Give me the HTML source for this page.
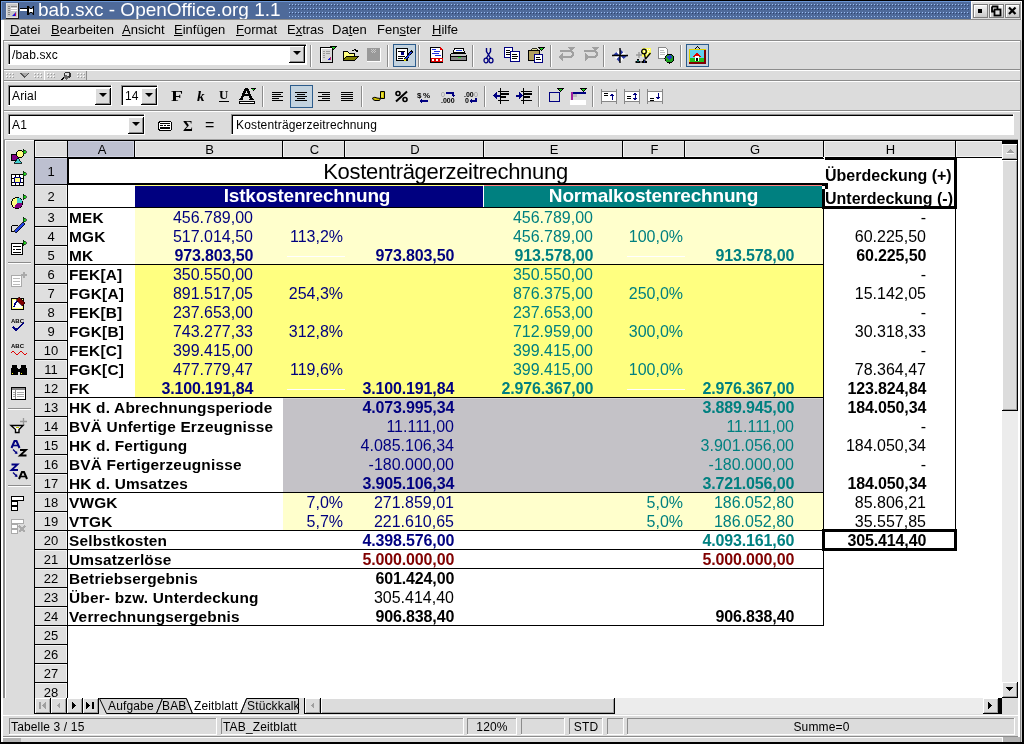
<!DOCTYPE html><html><head><meta charset="utf-8"><style>
html,body{margin:0;padding:0;}
body{width:1024px;height:744px;position:relative;overflow:hidden;background:#dcdcdc;font-family:"Liberation Sans",sans-serif;}
.t{will-change:transform;}
div{position:absolute;box-sizing:border-box;}
.t{white-space:nowrap;line-height:1;}
svg{position:absolute;overflow:visible;}
</style></head><body>
<div style="left:0px;top:0px;width:1024px;height:744px;background:#000"></div>
<div style="left:1px;top:1px;width:1022px;height:742px;background:#dcdcdc"></div>
<div style="left:1px;top:1px;width:1022px;height:19px;background:#6a96d6"></div>
<div style="left:2px;top:2px;width:1021px;height:17px;background:#4e6a9a"></div>
<svg style="left:0;top:0" width="1024" height="20"><defs><pattern id="dots" x="289" y="4" width="3" height="4" patternUnits="userSpaceOnUse"><rect x="1" y="1" width="1" height="1" fill="#2f4470"/><rect x="0" y="0" width="1" height="1" fill="#9bbef5"/></pattern></defs><rect x="289" y="4" width="680" height="13" fill="url(#dots)"/></svg>
<div style="left:6px;top:3px;width:13px;height:16px;background:#1e1e1e"></div>
<div style="left:6px;top:3px;width:12px;height:15px;background:#e0e0e0"></div>
<div style="left:7px;top:4px;width:10px;height:13px;background:#c8c8c8"></div>
<svg style="left:6px;top:3px" width="13" height="16"><g fill="#888"><rect x="2" y="3" width="2" height="1"/><rect x="5" y="3" width="6" height="1"/><rect x="2" y="5" width="2" height="1"/><rect x="5" y="5" width="6" height="1" fill="#fff"/><rect x="2" y="7" width="2" height="1"/><rect x="5" y="7" width="6" height="1" fill="#fff"/><rect x="2" y="9" width="2" height="1"/><rect x="2" y="11" width="2" height="1"/></g><path d="M6 13 L10 13 L10 9 Z" fill="#1010e0"/><rect x="9" y="10" width="1" height="3" fill="#c01060"/></svg>
<svg style="left:20px;top:5px" width="15" height="11"><rect x="0" y="4" width="7" height="2" fill="#fff"/><rect x="0" y="3" width="7" height="1" fill="#000"/><path d="M7 1 L9 1 L10 3 L12 3 L13 1 L14 1 L14 10 L13 10 L12 8 L10 8 L9 10 L7 10 Z" fill="#000"/><path d="M9 3 L10 4 L12 4 L13 3 L13 8 L12 7 L10 7 L9 8 Z" fill="#fff"/></svg>
<div class="t" style="left:38px;top:1px;font-size:19px;color:#fff;line-height:18px;">bab.sxc - OpenOffice.org 1.1</div>
<div style="left:971px;top:1px;width:51px;height:19px;background:#fff"></div>
<div style="left:972px;top:2px;width:49px;height:17px;background:#dcdcdc"></div>
<div style="left:1020px;top:2px;width:1px;height:17px;background:#a0a0a0"></div>
<div style="left:973px;top:4px;width:15px;height:14px;background:#7c7c7c"></div>
<div style="left:974px;top:5px;width:13px;height:12px;background:linear-gradient(#f4f4f4,#c8c8c8)"></div>
<div style="left:974px;top:5px;width:13px;height:1px;background:#fff"></div>
<div style="left:974px;top:5px;width:1px;height:12px;background:#fff"></div>
<div style="left:989px;top:4px;width:15px;height:14px;background:#7c7c7c"></div>
<div style="left:990px;top:5px;width:13px;height:12px;background:linear-gradient(#f4f4f4,#c8c8c8)"></div>
<div style="left:990px;top:5px;width:13px;height:1px;background:#fff"></div>
<div style="left:990px;top:5px;width:1px;height:12px;background:#fff"></div>
<div style="left:1005px;top:4px;width:15px;height:14px;background:#7c7c7c"></div>
<div style="left:1006px;top:5px;width:13px;height:12px;background:linear-gradient(#f4f4f4,#c8c8c8)"></div>
<div style="left:1006px;top:5px;width:13px;height:1px;background:#fff"></div>
<div style="left:1006px;top:5px;width:1px;height:12px;background:#fff"></div>
<svg style="left:973px;top:4px" width="48" height="14"><rect x="5" y="5" width="4" height="4" fill="#000"/><path d="M19 2.5 H24.5 V5 M19 2.5 V7.5 H21" stroke="#000" stroke-width="1.8" fill="none"/><rect x="21.5" y="5.5" width="6" height="6" fill="#ddd" stroke="#000" stroke-width="1.8"/><path d="M36 3.5 L42.5 10 M42.5 3.5 L36 10" stroke="#000" stroke-width="2.2"/></svg>
<div style="left:3px;top:19px;width:1018px;height:1px;background:#8c8c8c"></div>
<div style="left:3px;top:20px;width:1018px;height:20px;background:#dcdcdc"></div>
<div style="left:3px;top:20px;width:1px;height:20px;background:#fff"></div>
<div class="t" style="left:10px;top:23px;font-size:13px;color:#000;line-height:13px;"><u>D</u>atei</div>
<div class="t" style="left:51px;top:23px;font-size:13px;color:#000;line-height:13px;"><u>B</u>earbeiten</div>
<div class="t" style="left:122px;top:23px;font-size:13px;color:#000;line-height:13px;"><u>A</u>nsicht</div>
<div class="t" style="left:174px;top:23px;font-size:13px;color:#000;line-height:13px;"><u>E</u>infügen</div>
<div class="t" style="left:236px;top:23px;font-size:13px;color:#000;line-height:13px;"><u>F</u>ormat</div>
<div class="t" style="left:287px;top:23px;font-size:13px;color:#000;line-height:13px;">E<u>x</u>tras</div>
<div class="t" style="left:332px;top:23px;font-size:13px;color:#000;line-height:13px;">Da<u>t</u>en</div>
<div class="t" style="left:377px;top:23px;font-size:13px;color:#000;line-height:13px;">Fen<u>s</u>ter</div>
<div class="t" style="left:432px;top:23px;font-size:13px;color:#000;line-height:13px;"><u>H</u>ilfe</div>
<div style="left:3px;top:40px;width:1018px;height:1px;background:#8c8c8c"></div>
<div style="left:3px;top:41px;width:1018px;height:1px;background:#fff"></div>
<div style="left:3px;top:69px;width:1018px;height:1px;background:#8c8c8c"></div>
<div style="left:3px;top:70px;width:1018px;height:1px;background:#fff"></div>
<div style="left:3px;top:80px;width:1018px;height:1px;background:#8c8c8c"></div>
<div style="left:3px;top:81px;width:1018px;height:1px;background:#fff"></div>
<div style="left:3px;top:110px;width:1018px;height:1px;background:#8c8c8c"></div>
<div style="left:3px;top:111px;width:1018px;height:1px;background:#fff"></div>
<div style="left:8px;top:44px;width:299px;height:21px;background:#fff"></div>
<div style="left:8px;top:44px;width:299px;height:1px;background:#8c8c8c"></div>
<div style="left:8px;top:44px;width:1px;height:21px;background:#8c8c8c"></div>
<div style="left:9px;top:45px;width:297px;height:1px;background:#000"></div>
<div style="left:9px;top:45px;width:1px;height:19px;background:#000"></div>
<div style="left:8px;top:64px;width:299px;height:1px;background:#fff"></div>
<div style="left:306px;top:44px;width:1px;height:21px;background:#fff"></div>
<div class="t" style="left:12px;top:49px;font-size:12px;line-height:13px;letter-spacing:0.15px;">/bab.sxc</div>
<div style="left:289px;top:46px;width:16px;height:17px;background:#000"></div>
<div style="left:289px;top:46px;width:15px;height:16px;background:#fff"></div>
<div style="left:290px;top:47px;width:14px;height:15px;background:#8c8c8c"></div>
<div style="left:290px;top:47px;width:13px;height:14px;background:#dcdcdc"></div>
<svg style="left:293px;top:51px" width="8" height="5"><path d="M0 0 L8 0 L4 4 Z" fill="#000"/></svg>
<div style="left:310px;top:45px;width:1px;height:22px;background:#8c8c8c"></div>
<div style="left:311px;top:45px;width:1px;height:22px;background:#fff"></div>
<div style="left:387px;top:45px;width:1px;height:22px;background:#8c8c8c"></div>
<div style="left:388px;top:45px;width:1px;height:22px;background:#fff"></div>
<div style="left:418px;top:45px;width:1px;height:22px;background:#8c8c8c"></div>
<div style="left:419px;top:45px;width:1px;height:22px;background:#fff"></div>
<div style="left:472px;top:45px;width:1px;height:22px;background:#8c8c8c"></div>
<div style="left:473px;top:45px;width:1px;height:22px;background:#fff"></div>
<div style="left:550px;top:45px;width:1px;height:22px;background:#8c8c8c"></div>
<div style="left:551px;top:45px;width:1px;height:22px;background:#fff"></div>
<div style="left:603px;top:45px;width:1px;height:22px;background:#8c8c8c"></div>
<div style="left:604px;top:45px;width:1px;height:22px;background:#fff"></div>
<div style="left:680px;top:45px;width:1px;height:22px;background:#8c8c8c"></div>
<div style="left:681px;top:45px;width:1px;height:22px;background:#fff"></div>
<div style="left:393px;top:44px;width:23px;height:23px;background:#2c5c8c"></div>
<div style="left:394px;top:45px;width:21px;height:21px;background:#c3d3df"></div>
<div style="left:686px;top:44px;width:23px;height:23px;background:#2c5c8c"></div>
<div style="left:687px;top:45px;width:21px;height:21px;background:#c3d3df"></div>
<svg style="left:320px;top:46px" width="17" height="18" shape-rendering="crispEdges"><rect x="0" y="1" width="13" height="16" fill="#000"/><rect x="1" y="2" width="11" height="14" fill="#fff"/><rect x="2" y="3" width="10" height="13" fill="#d8d8d8"/><g fill="#999"><rect x="3" y="5" width="2" height="1"/><rect x="6" y="5" width="4" height="1"/><rect x="3" y="7" width="2" height="1"/><rect x="6" y="7" width="4" height="1"/><rect x="3" y="9" width="2" height="1"/><rect x="3" y="11" width="2" height="1"/></g><path d="M7 14 L11 14 L11 10 Z" fill="#2020d0"/><rect x="10" y="11" width="1" height="3" fill="#c02070"/><path d="M10 0 L17 0 L13.5 4 Z" fill="#000"/><path d="M11 0.5 L16 0.5 L13.5 3 Z" fill="#20d020"/></svg>
<svg style="left:343px;top:48px" width="16" height="14" shape-rendering="crispEdges"><path d="M0 3 L5 3 L6 5 L12 5 L12 13 L0 13 Z" fill="#000"/><path d="M1 4 L5 4 L6 6 L11 6 L11 12 L1 12 Z" fill="#ffff80"/><path d="M3 8 L16 8 L12 13 L0 13 Z" fill="#000"/><path d="M3.5 9 L14.5 9 L11.5 12 L1 12 Z" fill="#7f7f00"/><path d="M9 3 Q11 0 14 2 L15 1 L15 4 L12 4 L13 3 Q11 1.5 10 3.5Z" fill="#000"/></svg>
<svg style="left:367px;top:48px" width="14" height="14" shape-rendering="crispEdges"><rect x="0" y="0" width="14" height="14" fill="#fff"/><rect x="0" y="0" width="13" height="13" fill="#999"/><g fill="#c8c8c8"><rect x="4" y="1" width="1" height="1"/><rect x="6" y="1" width="1" height="1"/><rect x="8" y="1" width="1" height="1"/><rect x="5" y="2" width="1" height="1"/><rect x="7" y="2" width="1" height="1"/><rect x="4" y="3" width="1" height="1"/><rect x="6" y="3" width="1" height="1"/><rect x="8" y="3" width="1" height="1"/><rect x="5" y="4" width="1" height="1"/><rect x="7" y="4" width="1" height="1"/></g></svg>
<svg style="left:396px;top:47px" width="17" height="15" shape-rendering="crispEdges"><rect x="0" y="1" width="12" height="13" fill="#000"/><rect x="1" y="2" width="10" height="11" fill="#fff"/><g fill="#000"><rect x="2" y="4" width="7" height="1"/><rect x="2" y="9" width="7" height="1"/><rect x="2" y="11" width="5" height="1"/></g><rect x="5" y="5" width="3" height="3" fill="#000080"/><path d="M8 12 L15 3 L17 5 L10 14 Z" fill="#000"/><path d="M9 12 L15 4.5 L16 5.5 L10 13 Z" fill="#2040e0"/><rect x="8" y="12" width="2" height="2" fill="#e0e000"/></svg>
<svg style="left:430px;top:47px" width="14" height="16" shape-rendering="crispEdges"><path d="M0 0 L10 0 L13 3 L13 16 L0 16 Z" fill="#000"/><path d="M1 1 L10 1 L12 3 L12 11 L1 11 Z" fill="#fff"/><path d="M10 0 L13 3 L10 3Z" fill="#e00000"/><g fill="#2030e0"><rect x="2" y="2" width="4" height="1"/><rect x="4" y="4" width="6" height="1"/><rect x="2" y="6" width="7" height="1"/><rect x="5" y="8" width="6" height="1"/></g><rect x="1" y="11" width="12" height="4" fill="#e00000"/><g fill="#fff"><rect x="2" y="12" width="2" height="2"/><rect x="6" y="12" width="2" height="2"/><rect x="10" y="12" width="2" height="2"/></g></svg>
<svg style="left:450px;top:48px" width="17" height="14" shape-rendering="crispEdges"><path d="M4 0 L14 0 L15 5 L3 5 Z" fill="#000"/><path d="M5 1 L13 1 L14 4 L4 4Z" fill="#fff"/><rect x="6" y="2" width="6" height="1" fill="#2040e0"/><path d="M1 5 L16 5 L17 8 L17 13 L0 13 L0 8 Z" fill="#000"/><rect x="1" y="6" width="15" height="2" fill="#c8c8c8"/><rect x="1" y="9" width="15" height="3" fill="#888"/><rect x="8" y="9" width="3" height="1" fill="#20e020"/></svg>
<svg style="left:483px;top:47px" width="12" height="17"><path d="M3.5 1 V4.5 L7.8 11.5 M7.5 1 V4.5 L3.2 11.5" stroke="#000080" stroke-width="1.4" fill="none"/><ellipse cx="3" cy="13.5" rx="2" ry="2.3" fill="none" stroke="#000080" stroke-width="1.3"/><ellipse cx="8" cy="13.5" rx="2" ry="2.3" fill="none" stroke="#000080" stroke-width="1.3"/></svg>
<svg style="left:504px;top:47px" width="16" height="15" shape-rendering="crispEdges"><rect x="0" y="0" width="9" height="11" fill="#000080"/><rect x="1" y="1" width="7" height="9" fill="#fff"/><g fill="#000"><rect x="2" y="3" width="4" height="1"/><rect x="2" y="5" width="5" height="1"/><rect x="2" y="7" width="4" height="1"/></g><rect x="6" y="4" width="10" height="11" fill="#000080"/><rect x="7" y="5" width="8" height="9" fill="#fff"/><g fill="#000"><rect x="8" y="7" width="5" height="1"/><rect x="8" y="9" width="6" height="1"/><rect x="8" y="11" width="5" height="1"/></g></svg>
<svg style="left:528px;top:47px" width="17" height="16" shape-rendering="crispEdges"><rect x="0" y="3" width="12" height="11" fill="#000"/><rect x="1" y="4" width="10" height="9" fill="#b0a060"/><path d="M3 3 L5 1 L8 1 L10 3Z" fill="#e0e0a0" stroke="#000" stroke-width="0.8"/><rect x="6" y="7" width="9" height="9" fill="#000080"/><rect x="7" y="8" width="7" height="7" fill="#fff"/><rect x="8" y="10" width="4" height="1" fill="#000"/><rect x="8" y="12" width="5" height="1" fill="#000"/><path d="M10 0 L17 0 L13.5 4 Z" fill="#000"/><path d="M11 0.5 L16 0.5 L13.5 3 Z" fill="#20d020"/></svg>
<svg style="left:558px;top:47px" width="17" height="14" shape-rendering="crispEdges"><path d="M2 4 L12 4 Q15 4 15 7 Q15 10 12 10 L4 10" stroke="#a0a0a0" stroke-width="2.2" fill="none"/><path d="M0 10 L5 6 L5 14Z" fill="#a0a0a0"/><path d="M9 0 L17 0 L13 4Z" fill="#a0a0a0"/></svg>
<svg style="left:582px;top:47px" width="17" height="14" shape-rendering="crispEdges"><path d="M2 4 L12 4 Q15 4 15 7 Q15 10 12 10 L3 10" stroke="#a0a0a0" stroke-width="2.2" fill="none"/><path d="M8 10 L3 6 L3 14Z" fill="#a0a0a0"/><path d="M9 0 L17 0 L13 4Z" fill="#a0a0a0"/></svg>
<svg style="left:611px;top:47px" width="18" height="17"><path d="M9 2 L12.5 5.5 L9 8.5Z M16.5 8.5 L12.5 12 L9 8.5Z M9 15.5 L5.5 12 L9 8.5Z M1.5 8.5 L5.5 5 L9 8.5Z" fill="#2838a8"/><path d="M9 2 L5.5 5.5 L9 8.5Z M16.5 8.5 L12.5 5 L9 8.5Z M9 15.5 L12.5 12 L9 8.5Z M1.5 8.5 L5.5 12 L9 8.5Z" fill="#fff"/><path d="M9 1 V16 M1 8.5 H17" stroke="#000" stroke-width="1.4"/></svg>
<svg style="left:635px;top:47px" width="17" height="17"><path d="M7 1 H16 V7 L12 10 H7Z" fill="#ffff60"/><g fill="#fff"><rect x="8" y="2" width="1" height="1"/><rect x="10" y="2" width="1" height="1"/><rect x="12" y="2" width="1" height="1"/><rect x="14" y="2" width="1" height="1"/><rect x="9" y="4" width="1" height="1"/><rect x="11" y="4" width="1" height="1"/><rect x="13" y="4" width="1" height="1"/><rect x="12" y="6" width="1" height="1"/></g><circle cx="9" cy="4.5" r="2.3" fill="none" stroke="#000" stroke-width="1.3"/><path d="M9.5 7 L10.5 12 M15.5 6 L10.5 12" stroke="#000" stroke-width="1.3" fill="none"/><path d="M4 5 V11 M1 8 H7" stroke="#999" stroke-width="1.4"/><path d="M2 12 H4 V14 H5.5 V16 H0.5 V14 H2Z" fill="#000"/><rect x="2.5" y="13" width="1" height="2" fill="#20a0a0"/><path d="M8 12.5 H10.5 V14 H12 V16 H6.5 V14 H8Z" fill="#000"/><rect x="9" y="13.5" width="1" height="2" fill="#2030a0"/></svg>
<svg style="left:658px;top:47px" width="17" height="17" shape-rendering="crispEdges"><path d="M0 0 L7 0 L10 3 L10 12 L0 12Z" fill="#888"/><path d="M1 1 L7 1 L9 3 L9 11 L1 11Z" fill="#fff"/><g fill="#bbb"><rect x="2" y="3" width="4" height="1"/><rect x="2" y="5" width="5" height="1"/><rect x="2" y="7" width="5" height="1"/></g><circle cx="11.5" cy="11.5" r="5" fill="#000"/><circle cx="11.5" cy="11.5" r="4" fill="#20a020"/><path d="M9 9 L12 8 L14 10 L12 13 L10 12Z" fill="#2040c0"/></svg>
<svg style="left:689px;top:46px" width="17" height="19" shape-rendering="crispEdges"><path d="M6 3 L8.5 0.5 L11 3" stroke="#000" stroke-width="1" fill="none"/><rect x="0" y="3" width="17" height="15" fill="#e0d000"/><rect x="1" y="4" width="14" height="12" fill="#60d0f0"/><rect x="1" y="12" width="14" height="4" fill="#20c020"/><path d="M4 11 L8 6 L12 11Z" fill="#e00000"/><rect x="6" y="10" width="4" height="5" fill="#fff"/><rect x="7" y="12" width="2" height="3" fill="#000"/><rect x="15" y="4" width="2" height="14" fill="#800000"/><rect x="0" y="16" width="17" height="2" fill="#800000"/></svg>
<div style="left:4px;top:71px;width:41px;height:9px;background:#d4d4d4"></div>
<div style="left:45px;top:71px;width:41px;height:9px;background:#d4d4d4"></div>
<div style="left:44px;top:71px;width:1px;height:9px;background:#fff"></div>
<div style="left:86px;top:71px;width:1px;height:9px;background:#8c8c8c"></div>
<svg style="left:6px;top:73px" width="9" height="6" shape-rendering="crispEdges"><rect x="0" y="0" width="1" height="1" fill="#fff"/><rect x="1" y="1" width="1" height="1" fill="#999"/><rect x="0" y="3" width="1" height="1" fill="#fff"/><rect x="1" y="4" width="1" height="1" fill="#999"/><rect x="3" y="0" width="1" height="1" fill="#fff"/><rect x="4" y="1" width="1" height="1" fill="#999"/><rect x="3" y="3" width="1" height="1" fill="#fff"/><rect x="4" y="4" width="1" height="1" fill="#999"/><rect x="6" y="0" width="1" height="1" fill="#fff"/><rect x="7" y="1" width="1" height="1" fill="#999"/><rect x="6" y="3" width="1" height="1" fill="#fff"/><rect x="7" y="4" width="1" height="1" fill="#999"/></svg>
<svg style="left:34px;top:73px" width="9" height="6" shape-rendering="crispEdges"><rect x="0" y="0" width="1" height="1" fill="#fff"/><rect x="1" y="1" width="1" height="1" fill="#999"/><rect x="0" y="3" width="1" height="1" fill="#fff"/><rect x="1" y="4" width="1" height="1" fill="#999"/><rect x="3" y="0" width="1" height="1" fill="#fff"/><rect x="4" y="1" width="1" height="1" fill="#999"/><rect x="3" y="3" width="1" height="1" fill="#fff"/><rect x="4" y="4" width="1" height="1" fill="#999"/><rect x="6" y="0" width="1" height="1" fill="#fff"/><rect x="7" y="1" width="1" height="1" fill="#999"/><rect x="6" y="3" width="1" height="1" fill="#fff"/><rect x="7" y="4" width="1" height="1" fill="#999"/></svg>
<svg style="left:47px;top:73px" width="9" height="6" shape-rendering="crispEdges"><rect x="0" y="0" width="1" height="1" fill="#fff"/><rect x="1" y="1" width="1" height="1" fill="#999"/><rect x="0" y="3" width="1" height="1" fill="#fff"/><rect x="1" y="4" width="1" height="1" fill="#999"/><rect x="3" y="0" width="1" height="1" fill="#fff"/><rect x="4" y="1" width="1" height="1" fill="#999"/><rect x="3" y="3" width="1" height="1" fill="#fff"/><rect x="4" y="4" width="1" height="1" fill="#999"/><rect x="6" y="0" width="1" height="1" fill="#fff"/><rect x="7" y="1" width="1" height="1" fill="#999"/><rect x="6" y="3" width="1" height="1" fill="#fff"/><rect x="7" y="4" width="1" height="1" fill="#999"/></svg>
<svg style="left:77px;top:73px" width="9" height="6" shape-rendering="crispEdges"><rect x="0" y="0" width="1" height="1" fill="#fff"/><rect x="1" y="1" width="1" height="1" fill="#999"/><rect x="0" y="3" width="1" height="1" fill="#fff"/><rect x="1" y="4" width="1" height="1" fill="#999"/><rect x="3" y="0" width="1" height="1" fill="#fff"/><rect x="4" y="1" width="1" height="1" fill="#999"/><rect x="3" y="3" width="1" height="1" fill="#fff"/><rect x="4" y="4" width="1" height="1" fill="#999"/><rect x="6" y="0" width="1" height="1" fill="#fff"/><rect x="7" y="1" width="1" height="1" fill="#999"/><rect x="6" y="3" width="1" height="1" fill="#fff"/><rect x="7" y="4" width="1" height="1" fill="#999"/></svg>
<svg style="left:19px;top:73px" width="11" height="5" shape-rendering="crispEdges"><path d="M0 0 L11 0 L5.5 5Z" fill="#555"/><path d="M2 0 L9 0 L5.5 3.5Z" fill="#aaa"/></svg>
<svg style="left:60px;top:71px" width="12" height="10" shape-rendering="crispEdges"><ellipse cx="7.5" cy="4" rx="3.8" ry="3.2" fill="#333"/><ellipse cx="7" cy="3.5" rx="2.2" ry="1.8" fill="#ddd"/><path d="M1 9 L5 6" stroke="#000" stroke-width="1.2"/><path d="M3 6 L6 3 L9 7 L6 9Z" fill="#666"/></svg>
<div style="left:8px;top:85px;width:104px;height:21px;background:#fff"></div>
<div style="left:8px;top:85px;width:104px;height:1px;background:#8c8c8c"></div>
<div style="left:8px;top:85px;width:1px;height:21px;background:#8c8c8c"></div>
<div style="left:9px;top:86px;width:102px;height:1px;background:#000"></div>
<div style="left:9px;top:86px;width:1px;height:19px;background:#000"></div>
<div style="left:8px;top:105px;width:104px;height:1px;background:#fff"></div>
<div style="left:111px;top:85px;width:1px;height:21px;background:#fff"></div>
<div class="t" style="left:12px;top:90px;font-size:12px;line-height:13px;letter-spacing:0.15px;">Arial</div>
<div style="left:95px;top:88px;width:16px;height:17px;background:#000"></div>
<div style="left:95px;top:88px;width:15px;height:16px;background:#fff"></div>
<div style="left:96px;top:89px;width:14px;height:15px;background:#8c8c8c"></div>
<div style="left:96px;top:89px;width:13px;height:14px;background:#dcdcdc"></div>
<svg style="left:99px;top:93px" width="8" height="5"><path d="M0 0 L8 0 L4 4 Z" fill="#000"/></svg>
<div style="left:121px;top:85px;width:37px;height:21px;background:#fff"></div>
<div style="left:121px;top:85px;width:37px;height:1px;background:#8c8c8c"></div>
<div style="left:121px;top:85px;width:1px;height:21px;background:#8c8c8c"></div>
<div style="left:122px;top:86px;width:35px;height:1px;background:#000"></div>
<div style="left:122px;top:86px;width:1px;height:19px;background:#000"></div>
<div style="left:121px;top:105px;width:37px;height:1px;background:#fff"></div>
<div style="left:157px;top:85px;width:1px;height:21px;background:#fff"></div>
<div class="t" style="left:125px;top:90px;font-size:12px;line-height:13px;letter-spacing:0.15px;">14</div>
<div style="left:141px;top:88px;width:16px;height:17px;background:#000"></div>
<div style="left:141px;top:88px;width:15px;height:16px;background:#fff"></div>
<div style="left:142px;top:89px;width:14px;height:15px;background:#8c8c8c"></div>
<div style="left:142px;top:89px;width:13px;height:14px;background:#dcdcdc"></div>
<svg style="left:145px;top:93px" width="8" height="5"><path d="M0 0 L8 0 L4 4 Z" fill="#000"/></svg>
<div style="left:262px;top:86px;width:1px;height:21px;background:#8c8c8c"></div>
<div style="left:263px;top:86px;width:1px;height:21px;background:#fff"></div>
<div style="left:361px;top:86px;width:1px;height:21px;background:#8c8c8c"></div>
<div style="left:362px;top:86px;width:1px;height:21px;background:#fff"></div>
<div style="left:484px;top:86px;width:1px;height:21px;background:#8c8c8c"></div>
<div style="left:485px;top:86px;width:1px;height:21px;background:#fff"></div>
<div style="left:538px;top:86px;width:1px;height:21px;background:#8c8c8c"></div>
<div style="left:539px;top:86px;width:1px;height:21px;background:#fff"></div>
<div style="left:592px;top:86px;width:1px;height:21px;background:#8c8c8c"></div>
<div style="left:593px;top:86px;width:1px;height:21px;background:#fff"></div>
<div class="t" style="left:171px;top:90px;font-family:'Liberation Serif',serif;font-weight:bold;font-size:14px;line-height:14px;transform:scaleX(1.4);transform-origin:left;">F</div>
<div class="t" style="left:197px;top:89px;font-family:'Liberation Serif',serif;font-weight:bold;font-style:italic;font-size:15px;line-height:14px;">k</div>
<div class="t" style="left:219px;top:88px;font-family:'Liberation Serif',serif;font-weight:bold;font-size:13px;line-height:13px;">U</div>
<div style="left:219px;top:101px;width:10px;height:1px;background:#000"></div>
<svg style="left:239px;top:88px" width="17" height="16" shape-rendering="crispEdges"><path d="M1 11 L6 0 L9 0 L14 11 L11 11 L10 8 L5 8 L4 11Z" fill="#000"/><path d="M6 6 L9 6 L7.5 2.5Z" fill="#dcdcdc"/><rect x="0" y="11" width="4" height="1" fill="#000"/><rect x="10" y="11" width="5" height="1" fill="#000"/><rect x="0" y="13" width="16" height="3" fill="#000"/><rect x="1" y="14" width="14" height="1" fill="#fff"/><path d="M11 0 L17 0 L14 3Z" fill="#000"/><path d="M12 0.5 L16 0.5 L14 2.5Z" fill="#20d020"/></svg>
<svg style="left:272px;top:92px" width="13" height="9" shape-rendering="crispEdges"><rect x="0" y="0" width="11" height="1" fill="#000"/><rect x="0" y="2" width="9" height="1" fill="#000"/><rect x="0" y="4" width="11" height="1" fill="#000"/><rect x="0" y="6" width="7" height="1" fill="#000"/><rect x="0" y="8" width="11" height="1" fill="#000"/></svg>
<div style="left:290px;top:85px;width:23px;height:23px;background:#2c5c8c"></div>
<div style="left:291px;top:86px;width:21px;height:21px;background:#c3d3df"></div>
<svg style="left:295px;top:92px" width="13" height="9" shape-rendering="crispEdges"><rect x="0" y="0" width="12" height="1" fill="#000"/><rect x="2" y="2" width="8" height="1" fill="#000"/><rect x="0" y="4" width="12" height="1" fill="#000"/><rect x="2" y="6" width="8" height="1" fill="#000"/><rect x="0" y="8" width="12" height="1" fill="#000"/></svg>
<svg style="left:318px;top:92px" width="13" height="9" shape-rendering="crispEdges"><rect x="0" y="0" width="12" height="1" fill="#000"/><rect x="4" y="2" width="8" height="1" fill="#000"/><rect x="0" y="4" width="12" height="1" fill="#000"/><rect x="4" y="6" width="8" height="1" fill="#000"/><rect x="0" y="8" width="12" height="1" fill="#000"/></svg>
<svg style="left:341px;top:92px" width="13" height="9" shape-rendering="crispEdges"><rect x="0" y="0" width="12" height="1" fill="#000"/><rect x="0" y="2" width="12" height="1" fill="#000"/><rect x="0" y="4" width="12" height="1" fill="#000"/><rect x="0" y="6" width="12" height="1" fill="#000"/><rect x="0" y="8" width="12" height="1" fill="#000"/></svg>
<svg style="left:372px;top:90px" width="14" height="12"><path d="M8.5 1.5 H12.5 V8.5 H8.5Z" fill="#d0c000" stroke="#000" stroke-width="1"/><rect x="9.5" y="3" width="1" height="4" fill="#ffff80"/><path d="M0.5 8 Q3 6.5 5 8 L8.5 8.5 L7.5 10.5 L3 10.5 Q0.5 10 0.5 8Z" fill="#d0c000" stroke="#000" stroke-width="1"/></svg>
<svg style="left:395px;top:91px" width="13" height="11"><circle cx="3" cy="2.5" r="2" fill="none" stroke="#000" stroke-width="1.6"/><circle cx="10" cy="8.5" r="2" fill="none" stroke="#000" stroke-width="1.6"/><path d="M1 10.5 L12 0.5" stroke="#000" stroke-width="2"/></svg>
<svg style="left:417px;top:91px" width="14" height="11" shape-rendering="crispEdges"><text x="0" y="7" font-family="Liberation Sans" font-weight="bold" font-size="8">$</text><text x="6" y="7" font-family="Liberation Sans" font-weight="bold" font-size="8">%</text><path d="M4 10 L11 10" stroke="#000080" stroke-width="1.2"/><path d="M2 10 L5 8 L5 12Z" fill="#000080"/></svg>
<svg style="left:441px;top:91px" width="14" height="12" shape-rendering="crispEdges"><text x="0" y="6" font-family="Liberation Sans" font-size="7" fill="#999">0</text><path d="M5 2 L12 2 L12 5" stroke="#000080" stroke-width="1.3" fill="none"/><path d="M10 4 L14 4 L12 6Z" fill="#000080"/><text x="0" y="12" font-family="Liberation Sans" font-weight="bold" font-size="7">.000</text></svg>
<svg style="left:464px;top:91px" width="14" height="12" shape-rendering="crispEdges"><text x="0" y="6" font-family="Liberation Sans" font-weight="bold" font-size="7">.00</text><text x="10" y="6" font-family="Liberation Sans" font-size="7" fill="#999">0</text><text x="1" y="12" font-family="Liberation Sans" font-weight="bold" font-size="7">0</text><path d="M6 10 L12 10 L12 7" stroke="#000080" stroke-width="1.3" fill="none"/><path d="M5 10 L8 8 L8 12Z" fill="#000080"/></svg>
<svg style="left:493px;top:88px" width="16" height="16" shape-rendering="crispEdges"><rect x="7" y="0" width="1" height="16" fill="#000"/><rect x="5" y="3" width="11" height="1" fill="#000"/><rect x="7" y="5" width="9" height="2" fill="#000"/><rect x="7" y="8" width="6" height="2" fill="#000"/><rect x="5" y="12" width="11" height="1" fill="#000"/><path d="M0 7.5 L4 4 L4 11Z" fill="#000080"/><rect x="3" y="7" width="4" height="1.5" fill="#000080"/></svg>
<svg style="left:516px;top:88px" width="16" height="16" shape-rendering="crispEdges"><rect x="7" y="0" width="1" height="16" fill="#000"/><rect x="5" y="3" width="11" height="1" fill="#000"/><rect x="8" y="5" width="8" height="2" fill="#000"/><rect x="8" y="8" width="6" height="2" fill="#000"/><rect x="5" y="12" width="11" height="1" fill="#000"/><path d="M7 7.5 L3 4 L3 11Z" fill="#000080"/><rect x="0" y="7" width="4" height="1.5" fill="#000080"/></svg>
<svg style="left:549px;top:88px" width="15" height="14" shape-rendering="crispEdges"><rect x="0.5" y="4.5" width="10" height="9" fill="none" stroke="#000080" stroke-width="1.3"/><path d="M8 0 L15 0 L11.5 4Z" fill="#000"/><path d="M9 0.5 L14 0.5 L11.5 3Z" fill="#20d020"/></svg>
<svg style="left:570px;top:88px" width="18" height="17" shape-rendering="crispEdges"><rect x="0" y="12" width="16" height="5" fill="#fff"/><rect x="1" y="4" width="15" height="1.5" fill="#000080"/><rect x="1" y="4" width="2" height="8" fill="#a020a0"/><rect x="3" y="6" width="4" height="3" fill="#bbb"/><path d="M10 0 L17 0 L13.5 4Z" fill="#000"/><path d="M11 0.5 L16 0.5 L13.5 3Z" fill="#20d020"/></svg>
<svg style="left:601px;top:89px" width="16" height="15" shape-rendering="crispEdges"><rect x="0" y="0" width="1" height="15" fill="#888"/><rect x="15" y="0" width="1" height="15" fill="#888"/><rect x="0" y="2" width="16" height="1" fill="#888"/><rect x="0" y="12" width="16" height="1" fill="#888"/><rect x="1" y="3" width="14" height="9" fill="#fff"/><rect x="3" y="4" width="4" height="1" fill="#000"/><rect x="3" y="6" width="4" height="1" fill="#000"/><path d="M11 4 L9 7 L13 7Z" fill="#000080"/><rect x="10.5" y="6" width="1" height="5" fill="#000080"/></svg>
<svg style="left:624px;top:89px" width="16" height="15" shape-rendering="crispEdges"><rect x="0" y="0" width="1" height="15" fill="#888"/><rect x="15" y="0" width="1" height="15" fill="#888"/><rect x="0" y="2" width="16" height="1" fill="#888"/><rect x="0" y="12" width="16" height="1" fill="#888"/><rect x="1" y="3" width="14" height="9" fill="#fff"/><rect x="3" y="7" width="4" height="1" fill="#000"/><rect x="3" y="9" width="4" height="1" fill="#000"/><path d="M11 3.5 L9 6 L13 6Z" fill="#000080"/><path d="M11 11.5 L9 9 L13 9Z" fill="#000080"/><rect x="10.5" y="5" width="1" height="5" fill="#000080"/></svg>
<svg style="left:647px;top:89px" width="16" height="15" shape-rendering="crispEdges"><rect x="0" y="0" width="1" height="15" fill="#888"/><rect x="15" y="0" width="1" height="15" fill="#888"/><rect x="0" y="2" width="16" height="1" fill="#888"/><rect x="0" y="12" width="16" height="1" fill="#888"/><rect x="1" y="3" width="14" height="9" fill="#fff"/><rect x="3" y="9" width="4" height="1" fill="#000"/><rect x="3" y="11" width="4" height="1" fill="#000"/><path d="M11 11 L9 8 L13 8Z" fill="#000080"/><rect x="10.5" y="4" width="1" height="5" fill="#000080"/></svg>
<div style="left:8px;top:114px;width:137px;height:21px;background:#fff"></div>
<div style="left:8px;top:114px;width:137px;height:1px;background:#8c8c8c"></div>
<div style="left:8px;top:114px;width:1px;height:21px;background:#8c8c8c"></div>
<div style="left:9px;top:115px;width:135px;height:1px;background:#000"></div>
<div style="left:9px;top:115px;width:1px;height:19px;background:#000"></div>
<div style="left:8px;top:134px;width:137px;height:1px;background:#fff"></div>
<div style="left:144px;top:114px;width:1px;height:21px;background:#fff"></div>
<div class="t" style="left:12px;top:119px;font-size:12px;line-height:13px;letter-spacing:0.15px;">A1</div>
<div style="left:128px;top:117px;width:16px;height:17px;background:#000"></div>
<div style="left:128px;top:117px;width:15px;height:16px;background:#fff"></div>
<div style="left:129px;top:118px;width:14px;height:15px;background:#8c8c8c"></div>
<div style="left:129px;top:118px;width:13px;height:14px;background:#dcdcdc"></div>
<svg style="left:132px;top:122px" width="8" height="5"><path d="M0 0 L8 0 L4 4 Z" fill="#000"/></svg>
<svg style="left:158px;top:121px" width="14" height="10" shape-rendering="crispEdges"><rect x="0.5" y="0.5" width="13" height="9" rx="2" fill="#fff" stroke="#000" stroke-width="1.2"/><rect x="2" y="2" width="10" height="1" fill="#000"/><rect x="2" y="4" width="3" height="1" fill="#000"/><rect x="6" y="4" width="2" height="1" fill="#000"/><rect x="9" y="4" width="3" height="1" fill="#000"/><rect x="2" y="6" width="10" height="2" fill="#000"/></svg>
<div class="t" style="left:183px;top:119px;font-family:'Liberation Serif',serif;font-weight:bold;font-size:15px;line-height:14px;">&Sigma;</div>
<div class="t" style="left:205px;top:117px;font-size:16px;line-height:16px;">=</div>
<div style="left:231px;top:114px;width:783px;height:21px;background:#fff"></div>
<div style="left:231px;top:114px;width:783px;height:1px;background:#8c8c8c"></div>
<div style="left:231px;top:114px;width:1px;height:21px;background:#8c8c8c"></div>
<div style="left:232px;top:115px;width:781px;height:1px;background:#000"></div>
<div style="left:232px;top:115px;width:1px;height:19px;background:#000"></div>
<div style="left:231px;top:134px;width:783px;height:1px;background:#fff"></div>
<div style="left:1013px;top:114px;width:1px;height:21px;background:#fff"></div>
<div class="t" style="left:236px;top:119px;font-size:12px;line-height:13px;letter-spacing:0.15px;">Kostenträgerzeitrechnung</div>
<div style="left:1px;top:20px;width:2px;height:722px;background:#fff"></div>
<div style="left:3px;top:41px;width:1px;height:98px;background:#999"></div>
<div style="left:3px;top:139px;width:1015px;height:1px;background:#a0a0a0"></div>
<div style="left:3px;top:140px;width:2px;height:558px;background:#8c8c8c"></div>
<div style="left:5px;top:140px;width:1px;height:558px;background:#fff"></div>
<div style="left:6px;top:140px;width:28px;height:1px;background:#fff"></div>
<div style="left:8px;top:262px;width:23px;height:1px;background:#8c8c8c"></div>
<div style="left:8px;top:263px;width:23px;height:1px;background:#fff"></div>
<div style="left:8px;top:408px;width:23px;height:1px;background:#8c8c8c"></div>
<div style="left:8px;top:409px;width:23px;height:1px;background:#fff"></div>
<div style="left:8px;top:485px;width:23px;height:1px;background:#8c8c8c"></div>
<div style="left:8px;top:486px;width:23px;height:1px;background:#fff"></div>
<div style="left:34px;top:140px;width:968px;height:558px;background:#fff"></div>
<div style="left:34px;top:140px;width:968px;height:1px;background:#000"></div>
<div style="left:34px;top:140px;width:1px;height:558px;background:#000"></div>
<div style="left:35px;top:141px;width:967px;height:16px;background:#dfdfdf"></div>
<div style="left:35px;top:157px;width:967px;height:1px;background:#000"></div>
<div style="left:35px;top:141px;width:32px;height:1px;background:#f4f4f4"></div>
<div style="left:35px;top:156px;width:32px;height:1px;background:#f4f4f4"></div>
<div style="left:35px;top:141px;width:1px;height:16px;background:#f4f4f4"></div>
<div style="left:68px;top:141px;width:66px;height:16px;background:#bdc0d0"></div>
<div style="left:68px;top:141px;width:66px;height:1px;background:#d0d3e2"></div>
<div style="left:68px;top:156px;width:66px;height:1px;background:#d0d3e2"></div>
<div style="left:133px;top:141px;width:1px;height:16px;background:#d0d3e2"></div>
<div style="left:67px;top:141px;width:1px;height:16px;background:#000"></div>
<div class="t" style="left:69px;top:144px;width:66px;font-size:13px;line-height:12px;text-align:center;">A</div>
<div style="left:135px;top:141px;width:147px;height:1px;background:#f4f4f4"></div>
<div style="left:135px;top:156px;width:147px;height:1px;background:#f4f4f4"></div>
<div style="left:135px;top:141px;width:1px;height:16px;background:#f4f4f4"></div>
<div style="left:134px;top:141px;width:1px;height:16px;background:#000"></div>
<div class="t" style="left:136px;top:144px;width:147px;font-size:13px;line-height:12px;text-align:center;">B</div>
<div style="left:283px;top:141px;width:61px;height:1px;background:#f4f4f4"></div>
<div style="left:283px;top:156px;width:61px;height:1px;background:#f4f4f4"></div>
<div style="left:283px;top:141px;width:1px;height:16px;background:#f4f4f4"></div>
<div style="left:282px;top:141px;width:1px;height:16px;background:#000"></div>
<div class="t" style="left:284px;top:144px;width:61px;font-size:13px;line-height:12px;text-align:center;">C</div>
<div style="left:345px;top:141px;width:138px;height:1px;background:#f4f4f4"></div>
<div style="left:345px;top:156px;width:138px;height:1px;background:#f4f4f4"></div>
<div style="left:345px;top:141px;width:1px;height:16px;background:#f4f4f4"></div>
<div style="left:344px;top:141px;width:1px;height:16px;background:#000"></div>
<div class="t" style="left:346px;top:144px;width:138px;font-size:13px;line-height:12px;text-align:center;">D</div>
<div style="left:484px;top:141px;width:138px;height:1px;background:#f4f4f4"></div>
<div style="left:484px;top:156px;width:138px;height:1px;background:#f4f4f4"></div>
<div style="left:484px;top:141px;width:1px;height:16px;background:#f4f4f4"></div>
<div style="left:483px;top:141px;width:1px;height:16px;background:#000"></div>
<div class="t" style="left:485px;top:144px;width:138px;font-size:13px;line-height:12px;text-align:center;">E</div>
<div style="left:623px;top:141px;width:61px;height:1px;background:#f4f4f4"></div>
<div style="left:623px;top:156px;width:61px;height:1px;background:#f4f4f4"></div>
<div style="left:623px;top:141px;width:1px;height:16px;background:#f4f4f4"></div>
<div style="left:622px;top:141px;width:1px;height:16px;background:#000"></div>
<div class="t" style="left:624px;top:144px;width:61px;font-size:13px;line-height:12px;text-align:center;">F</div>
<div style="left:685px;top:141px;width:138px;height:1px;background:#f4f4f4"></div>
<div style="left:685px;top:156px;width:138px;height:1px;background:#f4f4f4"></div>
<div style="left:685px;top:141px;width:1px;height:16px;background:#f4f4f4"></div>
<div style="left:684px;top:141px;width:1px;height:16px;background:#000"></div>
<div class="t" style="left:686px;top:144px;width:138px;font-size:13px;line-height:12px;text-align:center;">G</div>
<div style="left:824px;top:141px;width:131px;height:1px;background:#f4f4f4"></div>
<div style="left:824px;top:156px;width:131px;height:1px;background:#f4f4f4"></div>
<div style="left:824px;top:141px;width:1px;height:16px;background:#f4f4f4"></div>
<div style="left:823px;top:141px;width:1px;height:16px;background:#000"></div>
<div class="t" style="left:825px;top:144px;width:131px;font-size:13px;line-height:12px;text-align:center;">H</div>
<div style="left:956px;top:141px;width:46px;height:1px;background:#f4f4f4"></div>
<div style="left:956px;top:156px;width:46px;height:1px;background:#f4f4f4"></div>
<div style="left:956px;top:141px;width:1px;height:16px;background:#f4f4f4"></div>
<div style="left:955px;top:141px;width:1px;height:16px;background:#000"></div>
<div style="left:35px;top:158px;width:32px;height:540px;background:#dfdfdf"></div>
<div style="left:67px;top:141px;width:1px;height:557px;background:#000"></div>
<div style="left:35px;top:158px;width:32px;height:26px;background:#bdc0d0"></div>
<div style="left:35px;top:158px;width:32px;height:1px;background:#d0d3e2"></div>
<div style="left:35px;top:184px;width:32px;height:1px;background:#000"></div>
<div class="t" style="left:35px;top:165px;width:32px;font-size:13px;line-height:13px;text-align:center;">1</div>
<div style="left:35px;top:185px;width:32px;height:22px;background:#dfdfdf"></div>
<div style="left:35px;top:185px;width:32px;height:1px;background:#f4f4f4"></div>
<div style="left:66px;top:185px;width:1px;height:22px;background:#f4f4f4"></div>
<div style="left:35px;top:207px;width:32px;height:1px;background:#000"></div>
<div class="t" style="left:35px;top:190px;width:32px;font-size:13px;line-height:13px;text-align:center;">2</div>
<div style="left:35px;top:208px;width:32px;height:18px;background:#dfdfdf"></div>
<div style="left:35px;top:208px;width:32px;height:1px;background:#f4f4f4"></div>
<div style="left:66px;top:208px;width:1px;height:18px;background:#f4f4f4"></div>
<div style="left:35px;top:226px;width:32px;height:1px;background:#000"></div>
<div class="t" style="left:35px;top:211px;width:32px;font-size:13px;line-height:13px;text-align:center;">3</div>
<div style="left:35px;top:227px;width:32px;height:18px;background:#dfdfdf"></div>
<div style="left:35px;top:227px;width:32px;height:1px;background:#f4f4f4"></div>
<div style="left:66px;top:227px;width:1px;height:18px;background:#f4f4f4"></div>
<div style="left:35px;top:245px;width:32px;height:1px;background:#000"></div>
<div class="t" style="left:35px;top:230px;width:32px;font-size:13px;line-height:13px;text-align:center;">4</div>
<div style="left:35px;top:246px;width:32px;height:18px;background:#dfdfdf"></div>
<div style="left:35px;top:246px;width:32px;height:1px;background:#f4f4f4"></div>
<div style="left:66px;top:246px;width:1px;height:18px;background:#f4f4f4"></div>
<div style="left:35px;top:264px;width:32px;height:1px;background:#000"></div>
<div class="t" style="left:35px;top:249px;width:32px;font-size:13px;line-height:13px;text-align:center;">5</div>
<div style="left:35px;top:265px;width:32px;height:18px;background:#dfdfdf"></div>
<div style="left:35px;top:265px;width:32px;height:1px;background:#f4f4f4"></div>
<div style="left:66px;top:265px;width:1px;height:18px;background:#f4f4f4"></div>
<div style="left:35px;top:283px;width:32px;height:1px;background:#000"></div>
<div class="t" style="left:35px;top:268px;width:32px;font-size:13px;line-height:13px;text-align:center;">6</div>
<div style="left:35px;top:284px;width:32px;height:18px;background:#dfdfdf"></div>
<div style="left:35px;top:284px;width:32px;height:1px;background:#f4f4f4"></div>
<div style="left:66px;top:284px;width:1px;height:18px;background:#f4f4f4"></div>
<div style="left:35px;top:302px;width:32px;height:1px;background:#000"></div>
<div class="t" style="left:35px;top:287px;width:32px;font-size:13px;line-height:13px;text-align:center;">7</div>
<div style="left:35px;top:303px;width:32px;height:18px;background:#dfdfdf"></div>
<div style="left:35px;top:303px;width:32px;height:1px;background:#f4f4f4"></div>
<div style="left:66px;top:303px;width:1px;height:18px;background:#f4f4f4"></div>
<div style="left:35px;top:321px;width:32px;height:1px;background:#000"></div>
<div class="t" style="left:35px;top:306px;width:32px;font-size:13px;line-height:13px;text-align:center;">8</div>
<div style="left:35px;top:322px;width:32px;height:18px;background:#dfdfdf"></div>
<div style="left:35px;top:322px;width:32px;height:1px;background:#f4f4f4"></div>
<div style="left:66px;top:322px;width:1px;height:18px;background:#f4f4f4"></div>
<div style="left:35px;top:340px;width:32px;height:1px;background:#000"></div>
<div class="t" style="left:35px;top:325px;width:32px;font-size:13px;line-height:13px;text-align:center;">9</div>
<div style="left:35px;top:341px;width:32px;height:18px;background:#dfdfdf"></div>
<div style="left:35px;top:341px;width:32px;height:1px;background:#f4f4f4"></div>
<div style="left:66px;top:341px;width:1px;height:18px;background:#f4f4f4"></div>
<div style="left:35px;top:359px;width:32px;height:1px;background:#000"></div>
<div class="t" style="left:35px;top:344px;width:32px;font-size:13px;line-height:13px;text-align:center;">10</div>
<div style="left:35px;top:360px;width:32px;height:18px;background:#dfdfdf"></div>
<div style="left:35px;top:360px;width:32px;height:1px;background:#f4f4f4"></div>
<div style="left:66px;top:360px;width:1px;height:18px;background:#f4f4f4"></div>
<div style="left:35px;top:378px;width:32px;height:1px;background:#000"></div>
<div class="t" style="left:35px;top:363px;width:32px;font-size:13px;line-height:13px;text-align:center;">11</div>
<div style="left:35px;top:379px;width:32px;height:18px;background:#dfdfdf"></div>
<div style="left:35px;top:379px;width:32px;height:1px;background:#f4f4f4"></div>
<div style="left:66px;top:379px;width:1px;height:18px;background:#f4f4f4"></div>
<div style="left:35px;top:397px;width:32px;height:1px;background:#000"></div>
<div class="t" style="left:35px;top:382px;width:32px;font-size:13px;line-height:13px;text-align:center;">12</div>
<div style="left:35px;top:398px;width:32px;height:18px;background:#dfdfdf"></div>
<div style="left:35px;top:398px;width:32px;height:1px;background:#f4f4f4"></div>
<div style="left:66px;top:398px;width:1px;height:18px;background:#f4f4f4"></div>
<div style="left:35px;top:416px;width:32px;height:1px;background:#000"></div>
<div class="t" style="left:35px;top:401px;width:32px;font-size:13px;line-height:13px;text-align:center;">13</div>
<div style="left:35px;top:417px;width:32px;height:18px;background:#dfdfdf"></div>
<div style="left:35px;top:417px;width:32px;height:1px;background:#f4f4f4"></div>
<div style="left:66px;top:417px;width:1px;height:18px;background:#f4f4f4"></div>
<div style="left:35px;top:435px;width:32px;height:1px;background:#000"></div>
<div class="t" style="left:35px;top:420px;width:32px;font-size:13px;line-height:13px;text-align:center;">14</div>
<div style="left:35px;top:436px;width:32px;height:18px;background:#dfdfdf"></div>
<div style="left:35px;top:436px;width:32px;height:1px;background:#f4f4f4"></div>
<div style="left:66px;top:436px;width:1px;height:18px;background:#f4f4f4"></div>
<div style="left:35px;top:454px;width:32px;height:1px;background:#000"></div>
<div class="t" style="left:35px;top:439px;width:32px;font-size:13px;line-height:13px;text-align:center;">15</div>
<div style="left:35px;top:455px;width:32px;height:18px;background:#dfdfdf"></div>
<div style="left:35px;top:455px;width:32px;height:1px;background:#f4f4f4"></div>
<div style="left:66px;top:455px;width:1px;height:18px;background:#f4f4f4"></div>
<div style="left:35px;top:473px;width:32px;height:1px;background:#000"></div>
<div class="t" style="left:35px;top:458px;width:32px;font-size:13px;line-height:13px;text-align:center;">16</div>
<div style="left:35px;top:474px;width:32px;height:18px;background:#dfdfdf"></div>
<div style="left:35px;top:474px;width:32px;height:1px;background:#f4f4f4"></div>
<div style="left:66px;top:474px;width:1px;height:18px;background:#f4f4f4"></div>
<div style="left:35px;top:492px;width:32px;height:1px;background:#000"></div>
<div class="t" style="left:35px;top:477px;width:32px;font-size:13px;line-height:13px;text-align:center;">17</div>
<div style="left:35px;top:493px;width:32px;height:18px;background:#dfdfdf"></div>
<div style="left:35px;top:493px;width:32px;height:1px;background:#f4f4f4"></div>
<div style="left:66px;top:493px;width:1px;height:18px;background:#f4f4f4"></div>
<div style="left:35px;top:511px;width:32px;height:1px;background:#000"></div>
<div class="t" style="left:35px;top:496px;width:32px;font-size:13px;line-height:13px;text-align:center;">18</div>
<div style="left:35px;top:512px;width:32px;height:18px;background:#dfdfdf"></div>
<div style="left:35px;top:512px;width:32px;height:1px;background:#f4f4f4"></div>
<div style="left:66px;top:512px;width:1px;height:18px;background:#f4f4f4"></div>
<div style="left:35px;top:530px;width:32px;height:1px;background:#000"></div>
<div class="t" style="left:35px;top:515px;width:32px;font-size:13px;line-height:13px;text-align:center;">19</div>
<div style="left:35px;top:531px;width:32px;height:18px;background:#dfdfdf"></div>
<div style="left:35px;top:531px;width:32px;height:1px;background:#f4f4f4"></div>
<div style="left:66px;top:531px;width:1px;height:18px;background:#f4f4f4"></div>
<div style="left:35px;top:549px;width:32px;height:1px;background:#000"></div>
<div class="t" style="left:35px;top:534px;width:32px;font-size:13px;line-height:13px;text-align:center;">20</div>
<div style="left:35px;top:550px;width:32px;height:18px;background:#dfdfdf"></div>
<div style="left:35px;top:550px;width:32px;height:1px;background:#f4f4f4"></div>
<div style="left:66px;top:550px;width:1px;height:18px;background:#f4f4f4"></div>
<div style="left:35px;top:568px;width:32px;height:1px;background:#000"></div>
<div class="t" style="left:35px;top:553px;width:32px;font-size:13px;line-height:13px;text-align:center;">21</div>
<div style="left:35px;top:569px;width:32px;height:18px;background:#dfdfdf"></div>
<div style="left:35px;top:569px;width:32px;height:1px;background:#f4f4f4"></div>
<div style="left:66px;top:569px;width:1px;height:18px;background:#f4f4f4"></div>
<div style="left:35px;top:587px;width:32px;height:1px;background:#000"></div>
<div class="t" style="left:35px;top:572px;width:32px;font-size:13px;line-height:13px;text-align:center;">22</div>
<div style="left:35px;top:588px;width:32px;height:18px;background:#dfdfdf"></div>
<div style="left:35px;top:588px;width:32px;height:1px;background:#f4f4f4"></div>
<div style="left:66px;top:588px;width:1px;height:18px;background:#f4f4f4"></div>
<div style="left:35px;top:606px;width:32px;height:1px;background:#000"></div>
<div class="t" style="left:35px;top:591px;width:32px;font-size:13px;line-height:13px;text-align:center;">23</div>
<div style="left:35px;top:607px;width:32px;height:18px;background:#dfdfdf"></div>
<div style="left:35px;top:607px;width:32px;height:1px;background:#f4f4f4"></div>
<div style="left:66px;top:607px;width:1px;height:18px;background:#f4f4f4"></div>
<div style="left:35px;top:625px;width:32px;height:1px;background:#000"></div>
<div class="t" style="left:35px;top:610px;width:32px;font-size:13px;line-height:13px;text-align:center;">24</div>
<div style="left:35px;top:626px;width:32px;height:18px;background:#dfdfdf"></div>
<div style="left:35px;top:626px;width:32px;height:1px;background:#f4f4f4"></div>
<div style="left:66px;top:626px;width:1px;height:18px;background:#f4f4f4"></div>
<div style="left:35px;top:644px;width:32px;height:1px;background:#000"></div>
<div class="t" style="left:35px;top:629px;width:32px;font-size:13px;line-height:13px;text-align:center;">25</div>
<div style="left:35px;top:645px;width:32px;height:18px;background:#dfdfdf"></div>
<div style="left:35px;top:645px;width:32px;height:1px;background:#f4f4f4"></div>
<div style="left:66px;top:645px;width:1px;height:18px;background:#f4f4f4"></div>
<div style="left:35px;top:663px;width:32px;height:1px;background:#000"></div>
<div class="t" style="left:35px;top:648px;width:32px;font-size:13px;line-height:13px;text-align:center;">26</div>
<div style="left:35px;top:664px;width:32px;height:18px;background:#dfdfdf"></div>
<div style="left:35px;top:664px;width:32px;height:1px;background:#f4f4f4"></div>
<div style="left:66px;top:664px;width:1px;height:18px;background:#f4f4f4"></div>
<div style="left:35px;top:682px;width:32px;height:1px;background:#000"></div>
<div class="t" style="left:35px;top:667px;width:32px;font-size:13px;line-height:13px;text-align:center;">27</div>
<div style="left:35px;top:683px;width:32px;height:18px;background:#dfdfdf"></div>
<div style="left:35px;top:683px;width:32px;height:1px;background:#f4f4f4"></div>
<div style="left:66px;top:683px;width:1px;height:18px;background:#f4f4f4"></div>
<div style="left:35px;top:701px;width:32px;height:1px;background:#000"></div>
<div class="t" style="left:35px;top:686px;width:32px;font-size:13px;line-height:13px;text-align:center;">28</div>
<div style="left:135px;top:185px;width:348px;height:22px;background:#000080"></div>
<div style="left:484px;top:185px;width:339px;height:22px;background:#008080"></div>
<div style="left:135px;top:185px;width:348px;height:1px;background:#ffff80"></div>
<div style="left:484px;top:185px;width:339px;height:1px;background:#ff8080"></div>
<div style="left:135px;top:208px;width:688px;height:56px;background:#ffffcc"></div>
<div style="left:135px;top:265px;width:688px;height:132px;background:#ffff80"></div>
<div style="left:283px;top:398px;width:540px;height:94px;background:#c4c2c7"></div>
<div style="left:283px;top:493px;width:540px;height:37px;background:#ffffcc"></div>
<div style="left:283px;top:398px;width:540px;height:1px;background:#d8d6da"></div>
<div style="left:68px;top:207px;width:756px;height:1px;background:#000"></div>
<div style="left:68px;top:264px;width:756px;height:1px;background:#000"></div>
<div style="left:68px;top:397px;width:756px;height:1px;background:#000"></div>
<div style="left:68px;top:492px;width:756px;height:1px;background:#000"></div>
<div style="left:68px;top:530px;width:756px;height:1px;background:#000"></div>
<div style="left:68px;top:549px;width:756px;height:1px;background:#000"></div>
<div style="left:68px;top:568px;width:756px;height:1px;background:#000"></div>
<div style="left:68px;top:625px;width:756px;height:1px;background:#000"></div>
<div style="left:823px;top:208px;width:1px;height:418px;background:#000"></div>
<div style="left:955px;top:208px;width:1px;height:341px;background:#000"></div>
<div style="left:287px;top:256px;width:58px;height:1px;background:#fff"></div>
<div style="left:627px;top:256px;width:58px;height:1px;background:#fff"></div>
<div style="left:287px;top:389px;width:58px;height:1px;background:#fff"></div>
<div style="left:627px;top:389px;width:58px;height:1px;background:#fff"></div>
<div style="left:68px;top:157px;width:756px;height:2px;background:#000"></div>
<div style="left:68px;top:183px;width:755px;height:2px;background:#000"></div>
<div style="left:67px;top:157px;width:2px;height:28px;background:#000"></div>
<div style="left:825px;top:157px;width:132px;height:3px;background:#000"></div>
<div style="left:822px;top:206px;width:135px;height:3px;background:#000"></div>
<div style="left:822px;top:183px;width:6px;height:6px;background:#000"></div>
<div style="left:822px;top:186px;width:3px;height:3px;background:#fff"></div>
<div style="left:822px;top:189px;width:3px;height:20px;background:#000"></div>
<div style="left:954px;top:157px;width:3px;height:52px;background:#000"></div>
<div style="left:823px;top:157px;width:2px;height:1px;background:#fff"></div>
<div style="left:822px;top:529px;width:135px;height:3px;background:#000"></div>
<div style="left:822px;top:548px;width:135px;height:3px;background:#000"></div>
<div style="left:822px;top:529px;width:3px;height:22px;background:#000"></div>
<div style="left:954px;top:529px;width:3px;height:22px;background:#000"></div>
<div class="t" style="left:68px;top:159px;width:755px;height:26px;font-size:22px;line-height:26px;text-align:center;letter-spacing:-0.3px;">Kostenträgerzeitrechnung</div>
<div class="t" style="left:133px;top:185px;width:348px;height:22px;font-size:19px;font-weight:bold;color:#fff;line-height:22px;text-align:center;letter-spacing:-0.2px;">Istkostenrechnung</div>
<div class="t" style="left:484px;top:185px;width:339px;height:22px;font-size:19px;font-weight:bold;color:#fff;line-height:22px;text-align:center;letter-spacing:-0.2px;">Normalkostenrechnung</div>
<div class="t" style="left:825px;top:166px;font-size:16px;font-weight:bold;line-height:20px;">Überdeckung (+)</div>
<div class="t" style="left:825px;top:189px;font-size:16px;font-weight:bold;line-height:20px;">Unterdeckung (-)</div>
<div class="t" style="left:69px;top:209px;font-size:15.4px;line-height:18px;color:#000;font-weight:bold;letter-spacing:0.2px;">MEK</div>
<div class="t" style="left:53px;top:209px;width:200px;font-size:16px;line-height:18px;color:#000080;text-align:right;">456.789,00</div>
<div class="t" style="left:393px;top:209px;width:200px;font-size:16px;line-height:18px;color:#008080;text-align:right;">456.789,00</div>
<div class="t" style="left:726px;top:209px;width:200px;font-size:16px;line-height:18px;color:#000;text-align:right;">-</div>
<div class="t" style="left:69px;top:228px;font-size:15.4px;line-height:18px;color:#000;font-weight:bold;letter-spacing:0.2px;">MGK</div>
<div class="t" style="left:53px;top:228px;width:200px;font-size:16px;line-height:18px;color:#000080;text-align:right;">517.014,50</div>
<div class="t" style="left:193px;top:228px;width:150px;font-size:16px;line-height:18px;color:#000080;text-align:right;">113,2%</div>
<div class="t" style="left:393px;top:228px;width:200px;font-size:16px;line-height:18px;color:#008080;text-align:right;">456.789,00</div>
<div class="t" style="left:533px;top:228px;width:150px;font-size:16px;line-height:18px;color:#008080;text-align:right;">100,0%</div>
<div class="t" style="left:726px;top:228px;width:200px;font-size:16px;line-height:18px;color:#000;text-align:right;">60.225,50</div>
<div class="t" style="left:69px;top:247px;font-size:15.4px;line-height:18px;color:#000;font-weight:bold;letter-spacing:0.2px;">MK</div>
<div class="t" style="left:53px;top:247px;width:200.15px;font-size:16px;line-height:18px;color:#000080;font-weight:bold;text-align:right;letter-spacing:-0.15px;">973.803,50</div>
<div class="t" style="left:254px;top:247px;width:200.15px;font-size:16px;line-height:18px;color:#000080;font-weight:bold;text-align:right;letter-spacing:-0.15px;">973.803,50</div>
<div class="t" style="left:393px;top:247px;width:200.15px;font-size:16px;line-height:18px;color:#008080;font-weight:bold;text-align:right;letter-spacing:-0.15px;">913.578,00</div>
<div class="t" style="left:594px;top:247px;width:200.15px;font-size:16px;line-height:18px;color:#008080;font-weight:bold;text-align:right;letter-spacing:-0.15px;">913.578,00</div>
<div class="t" style="left:726px;top:247px;width:200.15px;font-size:16px;line-height:18px;color:#000;font-weight:bold;text-align:right;letter-spacing:-0.15px;">60.225,50</div>
<div class="t" style="left:69px;top:266px;font-size:15.4px;line-height:18px;color:#000;font-weight:bold;letter-spacing:0.2px;">FEK[A]</div>
<div class="t" style="left:53px;top:266px;width:200px;font-size:16px;line-height:18px;color:#000080;text-align:right;">350.550,00</div>
<div class="t" style="left:393px;top:266px;width:200px;font-size:16px;line-height:18px;color:#008080;text-align:right;">350.550,00</div>
<div class="t" style="left:726px;top:266px;width:200px;font-size:16px;line-height:18px;color:#000;text-align:right;">-</div>
<div class="t" style="left:69px;top:285px;font-size:15.4px;line-height:18px;color:#000;font-weight:bold;letter-spacing:0.2px;">FGK[A]</div>
<div class="t" style="left:53px;top:285px;width:200px;font-size:16px;line-height:18px;color:#000080;text-align:right;">891.517,05</div>
<div class="t" style="left:193px;top:285px;width:150px;font-size:16px;line-height:18px;color:#000080;text-align:right;">254,3%</div>
<div class="t" style="left:393px;top:285px;width:200px;font-size:16px;line-height:18px;color:#008080;text-align:right;">876.375,00</div>
<div class="t" style="left:533px;top:285px;width:150px;font-size:16px;line-height:18px;color:#008080;text-align:right;">250,0%</div>
<div class="t" style="left:726px;top:285px;width:200px;font-size:16px;line-height:18px;color:#000;text-align:right;">15.142,05</div>
<div class="t" style="left:69px;top:304px;font-size:15.4px;line-height:18px;color:#000;font-weight:bold;letter-spacing:0.2px;">FEK[B]</div>
<div class="t" style="left:53px;top:304px;width:200px;font-size:16px;line-height:18px;color:#000080;text-align:right;">237.653,00</div>
<div class="t" style="left:393px;top:304px;width:200px;font-size:16px;line-height:18px;color:#008080;text-align:right;">237.653,00</div>
<div class="t" style="left:726px;top:304px;width:200px;font-size:16px;line-height:18px;color:#000;text-align:right;">-</div>
<div class="t" style="left:69px;top:323px;font-size:15.4px;line-height:18px;color:#000;font-weight:bold;letter-spacing:0.2px;">FGK[B]</div>
<div class="t" style="left:53px;top:323px;width:200px;font-size:16px;line-height:18px;color:#000080;text-align:right;">743.277,33</div>
<div class="t" style="left:193px;top:323px;width:150px;font-size:16px;line-height:18px;color:#000080;text-align:right;">312,8%</div>
<div class="t" style="left:393px;top:323px;width:200px;font-size:16px;line-height:18px;color:#008080;text-align:right;">712.959,00</div>
<div class="t" style="left:533px;top:323px;width:150px;font-size:16px;line-height:18px;color:#008080;text-align:right;">300,0%</div>
<div class="t" style="left:726px;top:323px;width:200px;font-size:16px;line-height:18px;color:#000;text-align:right;">30.318,33</div>
<div class="t" style="left:69px;top:342px;font-size:15.4px;line-height:18px;color:#000;font-weight:bold;letter-spacing:0.2px;">FEK[C]</div>
<div class="t" style="left:53px;top:342px;width:200px;font-size:16px;line-height:18px;color:#000080;text-align:right;">399.415,00</div>
<div class="t" style="left:393px;top:342px;width:200px;font-size:16px;line-height:18px;color:#008080;text-align:right;">399.415,00</div>
<div class="t" style="left:726px;top:342px;width:200px;font-size:16px;line-height:18px;color:#000;text-align:right;">-</div>
<div class="t" style="left:69px;top:361px;font-size:15.4px;line-height:18px;color:#000;font-weight:bold;letter-spacing:0.2px;">FGK[C]</div>
<div class="t" style="left:53px;top:361px;width:200px;font-size:16px;line-height:18px;color:#000080;text-align:right;">477.779,47</div>
<div class="t" style="left:193px;top:361px;width:150px;font-size:16px;line-height:18px;color:#000080;text-align:right;">119,6%</div>
<div class="t" style="left:393px;top:361px;width:200px;font-size:16px;line-height:18px;color:#008080;text-align:right;">399.415,00</div>
<div class="t" style="left:533px;top:361px;width:150px;font-size:16px;line-height:18px;color:#008080;text-align:right;">100,0%</div>
<div class="t" style="left:726px;top:361px;width:200px;font-size:16px;line-height:18px;color:#000;text-align:right;">78.364,47</div>
<div class="t" style="left:69px;top:380px;font-size:15.4px;line-height:18px;color:#000;font-weight:bold;letter-spacing:0.2px;">FK</div>
<div class="t" style="left:53px;top:380px;width:200.15px;font-size:16px;line-height:18px;color:#000080;font-weight:bold;text-align:right;letter-spacing:-0.15px;">3.100.191,84</div>
<div class="t" style="left:254px;top:380px;width:200.15px;font-size:16px;line-height:18px;color:#000080;font-weight:bold;text-align:right;letter-spacing:-0.15px;">3.100.191,84</div>
<div class="t" style="left:393px;top:380px;width:200.15px;font-size:16px;line-height:18px;color:#008080;font-weight:bold;text-align:right;letter-spacing:-0.15px;">2.976.367,00</div>
<div class="t" style="left:594px;top:380px;width:200.15px;font-size:16px;line-height:18px;color:#008080;font-weight:bold;text-align:right;letter-spacing:-0.15px;">2.976.367,00</div>
<div class="t" style="left:726px;top:380px;width:200.15px;font-size:16px;line-height:18px;color:#000;font-weight:bold;text-align:right;letter-spacing:-0.15px;">123.824,84</div>
<div class="t" style="left:69px;top:399px;font-size:15.4px;line-height:18px;color:#000;font-weight:bold;letter-spacing:0.2px;">HK d. Abrechnungsperiode</div>
<div class="t" style="left:254px;top:399px;width:200.15px;font-size:16px;line-height:18px;color:#000080;font-weight:bold;text-align:right;letter-spacing:-0.15px;">4.073.995,34</div>
<div class="t" style="left:594px;top:399px;width:200.15px;font-size:16px;line-height:18px;color:#008080;font-weight:bold;text-align:right;letter-spacing:-0.15px;">3.889.945,00</div>
<div class="t" style="left:726px;top:399px;width:200.15px;font-size:16px;line-height:18px;color:#000;font-weight:bold;text-align:right;letter-spacing:-0.15px;">184.050,34</div>
<div class="t" style="left:69px;top:418px;font-size:15.4px;line-height:18px;color:#000;font-weight:bold;letter-spacing:0.2px;">BVÄ Unfertige Erzeugnisse</div>
<div class="t" style="left:254px;top:418px;width:200px;font-size:16px;line-height:18px;color:#000080;text-align:right;">11.111,00</div>
<div class="t" style="left:594px;top:418px;width:200px;font-size:16px;line-height:18px;color:#008080;text-align:right;">11.111,00</div>
<div class="t" style="left:726px;top:418px;width:200px;font-size:16px;line-height:18px;color:#000;text-align:right;">-</div>
<div class="t" style="left:69px;top:437px;font-size:15.4px;line-height:18px;color:#000;font-weight:bold;letter-spacing:0.2px;">HK d. Fertigung</div>
<div class="t" style="left:254px;top:437px;width:200px;font-size:16px;line-height:18px;color:#000080;text-align:right;">4.085.106,34</div>
<div class="t" style="left:594px;top:437px;width:200px;font-size:16px;line-height:18px;color:#008080;text-align:right;">3.901.056,00</div>
<div class="t" style="left:726px;top:437px;width:200px;font-size:16px;line-height:18px;color:#000;text-align:right;">184.050,34</div>
<div class="t" style="left:69px;top:456px;font-size:15.4px;line-height:18px;color:#000;font-weight:bold;letter-spacing:0.2px;">BVÄ Fertigerzeugnisse</div>
<div class="t" style="left:254px;top:456px;width:200px;font-size:16px;line-height:18px;color:#000080;text-align:right;">-180.000,00</div>
<div class="t" style="left:594px;top:456px;width:200px;font-size:16px;line-height:18px;color:#008080;text-align:right;">-180.000,00</div>
<div class="t" style="left:726px;top:456px;width:200px;font-size:16px;line-height:18px;color:#000;text-align:right;">-</div>
<div class="t" style="left:69px;top:475px;font-size:15.4px;line-height:18px;color:#000;font-weight:bold;letter-spacing:0.2px;">HK d. Umsatzes</div>
<div class="t" style="left:254px;top:475px;width:200.15px;font-size:16px;line-height:18px;color:#000080;font-weight:bold;text-align:right;letter-spacing:-0.15px;">3.905.106,34</div>
<div class="t" style="left:594px;top:475px;width:200.15px;font-size:16px;line-height:18px;color:#008080;font-weight:bold;text-align:right;letter-spacing:-0.15px;">3.721.056,00</div>
<div class="t" style="left:726px;top:475px;width:200.15px;font-size:16px;line-height:18px;color:#000;font-weight:bold;text-align:right;letter-spacing:-0.15px;">184.050,34</div>
<div class="t" style="left:69px;top:494px;font-size:15.4px;line-height:18px;color:#000;font-weight:bold;letter-spacing:0.2px;">VWGK</div>
<div class="t" style="left:193px;top:494px;width:150px;font-size:16px;line-height:18px;color:#000080;text-align:right;">7,0%</div>
<div class="t" style="left:254px;top:494px;width:200px;font-size:16px;line-height:18px;color:#000080;text-align:right;">271.859,01</div>
<div class="t" style="left:533px;top:494px;width:150px;font-size:16px;line-height:18px;color:#008080;text-align:right;">5,0%</div>
<div class="t" style="left:594px;top:494px;width:200px;font-size:16px;line-height:18px;color:#008080;text-align:right;">186.052,80</div>
<div class="t" style="left:726px;top:494px;width:200px;font-size:16px;line-height:18px;color:#000;text-align:right;">85.806,21</div>
<div class="t" style="left:69px;top:513px;font-size:15.4px;line-height:18px;color:#000;font-weight:bold;letter-spacing:0.2px;">VTGK</div>
<div class="t" style="left:193px;top:513px;width:150px;font-size:16px;line-height:18px;color:#000080;text-align:right;">5,7%</div>
<div class="t" style="left:254px;top:513px;width:200px;font-size:16px;line-height:18px;color:#000080;text-align:right;">221.610,65</div>
<div class="t" style="left:533px;top:513px;width:150px;font-size:16px;line-height:18px;color:#008080;text-align:right;">5,0%</div>
<div class="t" style="left:594px;top:513px;width:200px;font-size:16px;line-height:18px;color:#008080;text-align:right;">186.052,80</div>
<div class="t" style="left:726px;top:513px;width:200px;font-size:16px;line-height:18px;color:#000;text-align:right;">35.557,85</div>
<div class="t" style="left:69px;top:532px;font-size:15.4px;line-height:18px;color:#000;font-weight:bold;letter-spacing:0.2px;">Selbstkosten</div>
<div class="t" style="left:254px;top:532px;width:200.15px;font-size:16px;line-height:18px;color:#000080;font-weight:bold;text-align:right;letter-spacing:-0.15px;">4.398.576,00</div>
<div class="t" style="left:594px;top:532px;width:200.15px;font-size:16px;line-height:18px;color:#008080;font-weight:bold;text-align:right;letter-spacing:-0.15px;">4.093.161,60</div>
<div class="t" style="left:726px;top:532px;width:200.15px;font-size:16px;line-height:18px;color:#000;font-weight:bold;text-align:right;letter-spacing:-0.15px;">305.414,40</div>
<div class="t" style="left:69px;top:551px;font-size:15.4px;line-height:18px;color:#000;font-weight:bold;letter-spacing:0.2px;">Umsatzerlöse</div>
<div class="t" style="left:254px;top:551px;width:200.15px;font-size:16px;line-height:18px;color:#800000;font-weight:bold;text-align:right;letter-spacing:-0.15px;">5.000.000,00</div>
<div class="t" style="left:594px;top:551px;width:200.15px;font-size:16px;line-height:18px;color:#800000;font-weight:bold;text-align:right;letter-spacing:-0.15px;">5.000.000,00</div>
<div class="t" style="left:69px;top:570px;font-size:15.4px;line-height:18px;color:#000;font-weight:bold;letter-spacing:0.2px;">Betriebsergebnis</div>
<div class="t" style="left:254px;top:570px;width:200.15px;font-size:16px;line-height:18px;color:#000;font-weight:bold;text-align:right;letter-spacing:-0.15px;">601.424,00</div>
<div class="t" style="left:69px;top:589px;font-size:15.4px;line-height:18px;color:#000;font-weight:bold;letter-spacing:0.2px;">Über- bzw. Unterdeckung</div>
<div class="t" style="left:254px;top:589px;width:200px;font-size:16px;line-height:18px;color:#000;text-align:right;">305.414,40</div>
<div class="t" style="left:69px;top:608px;font-size:15.4px;line-height:18px;color:#000;font-weight:bold;letter-spacing:0.2px;">Verrechnungsergebnis</div>
<div class="t" style="left:254px;top:608px;width:200.15px;font-size:16px;line-height:18px;color:#000;font-weight:bold;text-align:right;letter-spacing:-0.15px;">906.838,40</div>
<div class="t" style="left:594px;top:608px;width:200.15px;font-size:16px;line-height:18px;color:#000;font-weight:bold;text-align:right;letter-spacing:-0.15px;">906.838,40</div>
<div style="left:1002px;top:141px;width:16px;height:557px;background:#ececec"></div>
<div style="left:1002px;top:140px;width:16px;height:4px;background:#000"></div>
<div style="left:1002px;top:144px;width:16px;height:16px;background:#000"></div>
<div style="left:1002px;top:144px;width:15px;height:15px;background:#fff"></div>
<div style="left:1003px;top:145px;width:14px;height:14px;background:#a0a0a0"></div>
<div style="left:1003px;top:145px;width:13px;height:13px;background:#dcdcdc"></div>
<svg style="left:1006px;top:148px" width="8" height="6" shape-rendering="crispEdges"><path d="M0 5 L4 1 L8 5Z" fill="#a0a0a0"/><rect x="0" y="5" width="8" height="1" fill="#fff"/></svg>
<div style="left:1002px;top:160px;width:16px;height:251px;background:#000"></div>
<div style="left:1002px;top:160px;width:15px;height:250px;background:#fff"></div>
<div style="left:1003px;top:161px;width:14px;height:249px;background:#a0a0a0"></div>
<div style="left:1003px;top:161px;width:13px;height:248px;background:#dcdcdc"></div>
<div style="left:1002px;top:682px;width:16px;height:16px;background:#000"></div>
<div style="left:1002px;top:682px;width:15px;height:15px;background:#fff"></div>
<div style="left:1003px;top:683px;width:14px;height:14px;background:#a0a0a0"></div>
<div style="left:1003px;top:683px;width:13px;height:13px;background:#dcdcdc"></div>
<svg style="left:1006px;top:687px" width="8" height="5" shape-rendering="crispEdges"><path d="M0 0 L7 0 L3.5 4Z" fill="#000"/></svg>
<div style="left:1018px;top:140px;width:2px;height:597px;background:#fff"></div>
<div style="left:1020px;top:41px;width:1px;height:703px;background:#8c8c8c"></div>
<div style="left:1021px;top:41px;width:1px;height:703px;background:#d0d0d0"></div>
<div style="left:1022px;top:0px;width:2px;height:744px;background:#000"></div>
<div style="left:35px;top:698px;width:967px;height:16px;background:#dcdcdc"></div>
<div style="left:34px;top:698px;width:1px;height:16px;background:#000"></div>
<div style="left:35px;top:698px;width:16px;height:16px;background:#000"></div>
<div style="left:35px;top:698px;width:15px;height:15px;background:#fff"></div>
<div style="left:36px;top:699px;width:14px;height:14px;background:#a0a0a0"></div>
<div style="left:36px;top:699px;width:13px;height:13px;background:#dcdcdc"></div>
<svg style="left:39px;top:702px" width="8" height="8" shape-rendering="crispEdges"><rect x="0" y="0" width="1.5" height="7" fill="#a0a0a0"/><path d="M7 0 L7 7 L3 3.5Z" fill="#a0a0a0"/></svg>
<div style="left:51px;top:698px;width:16px;height:16px;background:#000"></div>
<div style="left:51px;top:698px;width:15px;height:15px;background:#fff"></div>
<div style="left:52px;top:699px;width:14px;height:14px;background:#a0a0a0"></div>
<div style="left:52px;top:699px;width:13px;height:13px;background:#dcdcdc"></div>
<svg style="left:56px;top:702px" width="8" height="8" shape-rendering="crispEdges"><path d="M4 0 L4 7 L0.5 3.5Z" fill="#a0a0a0"/></svg>
<div style="left:67px;top:698px;width:16px;height:16px;background:#000"></div>
<div style="left:67px;top:698px;width:15px;height:15px;background:#fff"></div>
<div style="left:68px;top:699px;width:14px;height:14px;background:#a0a0a0"></div>
<div style="left:68px;top:699px;width:13px;height:13px;background:#dcdcdc"></div>
<svg style="left:72px;top:702px" width="8" height="8" shape-rendering="crispEdges"><path d="M0 0 L0 7 L4 3.5Z" fill="#000"/></svg>
<div style="left:83px;top:698px;width:16px;height:16px;background:#000"></div>
<div style="left:83px;top:698px;width:15px;height:15px;background:#fff"></div>
<div style="left:84px;top:699px;width:14px;height:14px;background:#a0a0a0"></div>
<div style="left:84px;top:699px;width:13px;height:13px;background:#dcdcdc"></div>
<svg style="left:86px;top:702px" width="9" height="8" shape-rendering="crispEdges"><path d="M0 0 L0 7 L4 3.5Z" fill="#000"/><rect x="6" y="0" width="1.5" height="7" fill="#000"/></svg>
<svg style="left:99px;top:698px" width="200" height="16"><rect x="0" y="0" width="200" height="16" fill="#dcdcdc"/><path d="M0.5 0.5 L7.5 15.5 L57.5 15.5 L63.5 0.5 Z" fill="#d4d4d4" stroke="#000" stroke-width="1"/><path d="M63.5 0.5 L57.5 15.5 L93.5 15.5 L87.5 0.5 Z" fill="#d4d4d4" stroke="#000" stroke-width="1"/><path d="M147.5 0.5 L141.5 15.5 L199.5 15.5 L199.5 0.5 Z" fill="#d4d4d4" stroke="#000" stroke-width="1"/><path d="M87.5 0 L93.5 15 L141.5 15 L147.5 0 Z" fill="#fff" stroke="none"/><path d="M87.5 0.5 L93.5 15.5 L141.5 15.5 L147.5 0.5" fill="none" stroke="#000" stroke-width="1"/></svg>
<div class="t" style="left:108px;top:700px;font-size:12px;line-height:13px;letter-spacing:0.15px;">Aufgabe</div>
<div class="t" style="left:162px;top:700px;font-size:12px;line-height:13px;letter-spacing:0.15px;">BAB</div>
<div class="t" style="left:194px;top:700px;font-size:12px;line-height:13px;letter-spacing:0.15px;">Zeitblatt</div>
<div class="t" style="left:247px;top:700px;font-size:12px;line-height:13px;letter-spacing:0.15px;">Stückkalk</div>
<div style="left:304px;top:698px;width:1px;height:16px;background:#000"></div>
<div style="left:305px;top:698px;width:16px;height:16px;background:#000"></div>
<div style="left:305px;top:698px;width:15px;height:15px;background:#fff"></div>
<div style="left:306px;top:699px;width:14px;height:14px;background:#a0a0a0"></div>
<div style="left:306px;top:699px;width:13px;height:13px;background:#dcdcdc"></div>
<svg style="left:310px;top:702px" width="6" height="8" shape-rendering="crispEdges"><path d="M4 0 L4 7 L0.5 3.5Z" fill="#a0a0a0"/></svg>
<div style="left:321px;top:698px;width:662px;height:16px;background:#ececec"></div>
<div style="left:321px;top:698px;width:294px;height:16px;background:#000"></div>
<div style="left:321px;top:698px;width:293px;height:15px;background:#fff"></div>
<div style="left:322px;top:699px;width:292px;height:14px;background:#a0a0a0"></div>
<div style="left:322px;top:699px;width:291px;height:13px;background:#dcdcdc"></div>
<div style="left:983px;top:698px;width:16px;height:16px;background:#000"></div>
<div style="left:983px;top:698px;width:15px;height:15px;background:#fff"></div>
<div style="left:984px;top:699px;width:14px;height:14px;background:#a0a0a0"></div>
<div style="left:984px;top:699px;width:13px;height:13px;background:#dcdcdc"></div>
<svg style="left:988px;top:702px" width="6" height="8" shape-rendering="crispEdges"><path d="M0 0 L0 7 L4 3.5Z" fill="#000"/></svg>
<div style="left:998px;top:698px;width:4px;height:16px;background:#000"></div>
<div style="left:1002px;top:698px;width:16px;height:16px;background:#dcdcdc"></div>
<div style="left:3px;top:714px;width:1015px;height:1px;background:#dcdcdc"></div>
<div style="left:3px;top:715px;width:1015px;height:1px;background:#fff"></div>
<div style="left:9px;top:718px;width:208px;height:17px;background:#dcdcdc"></div>
<div style="left:9px;top:718px;width:208px;height:1px;background:#8c8c8c"></div>
<div style="left:9px;top:718px;width:1px;height:17px;background:#8c8c8c"></div>
<div style="left:9px;top:734px;width:208px;height:1px;background:#fff"></div>
<div style="left:216px;top:718px;width:1px;height:17px;background:#fff"></div>
<div class="t" style="left:11px;top:721px;font-size:12px;line-height:13px;letter-spacing:0.15px;">Tabelle 3 / 15</div>
<div style="left:221px;top:718px;width:243px;height:17px;background:#dcdcdc"></div>
<div style="left:221px;top:718px;width:243px;height:1px;background:#8c8c8c"></div>
<div style="left:221px;top:718px;width:1px;height:17px;background:#8c8c8c"></div>
<div style="left:221px;top:734px;width:243px;height:1px;background:#fff"></div>
<div style="left:463px;top:718px;width:1px;height:17px;background:#fff"></div>
<div class="t" style="left:223px;top:721px;font-size:12px;line-height:13px;letter-spacing:0.15px;">TAB_Zeitblatt</div>
<div style="left:467px;top:718px;width:50px;height:17px;background:#dcdcdc"></div>
<div style="left:467px;top:718px;width:50px;height:1px;background:#8c8c8c"></div>
<div style="left:467px;top:718px;width:1px;height:17px;background:#8c8c8c"></div>
<div style="left:467px;top:734px;width:50px;height:1px;background:#fff"></div>
<div style="left:516px;top:718px;width:1px;height:17px;background:#fff"></div>
<div class="t" style="left:467px;top:721px;width:50px;font-size:12px;line-height:13px;letter-spacing:0.15px;text-align:center;">120%</div>
<div style="left:521px;top:718px;width:44px;height:17px;background:#dcdcdc"></div>
<div style="left:521px;top:718px;width:44px;height:1px;background:#8c8c8c"></div>
<div style="left:521px;top:718px;width:1px;height:17px;background:#8c8c8c"></div>
<div style="left:521px;top:734px;width:44px;height:1px;background:#fff"></div>
<div style="left:564px;top:718px;width:1px;height:17px;background:#fff"></div>
<div style="left:569px;top:718px;width:34px;height:17px;background:#dcdcdc"></div>
<div style="left:569px;top:718px;width:34px;height:1px;background:#8c8c8c"></div>
<div style="left:569px;top:718px;width:1px;height:17px;background:#8c8c8c"></div>
<div style="left:569px;top:734px;width:34px;height:1px;background:#fff"></div>
<div style="left:602px;top:718px;width:1px;height:17px;background:#fff"></div>
<div class="t" style="left:569px;top:721px;width:34px;font-size:12px;line-height:13px;letter-spacing:0.15px;text-align:center;">STD</div>
<div style="left:607px;top:718px;width:17px;height:17px;background:#dcdcdc"></div>
<div style="left:607px;top:718px;width:17px;height:1px;background:#8c8c8c"></div>
<div style="left:607px;top:718px;width:1px;height:17px;background:#8c8c8c"></div>
<div style="left:607px;top:734px;width:17px;height:1px;background:#fff"></div>
<div style="left:623px;top:718px;width:1px;height:17px;background:#fff"></div>
<div style="left:627px;top:718px;width:388px;height:17px;background:#dcdcdc"></div>
<div style="left:627px;top:718px;width:388px;height:1px;background:#8c8c8c"></div>
<div style="left:627px;top:718px;width:1px;height:17px;background:#8c8c8c"></div>
<div style="left:627px;top:734px;width:388px;height:1px;background:#fff"></div>
<div style="left:1014px;top:718px;width:1px;height:17px;background:#fff"></div>
<div class="t" style="left:627px;top:721px;width:389px;font-size:12px;line-height:13px;letter-spacing:0.15px;text-align:center;">Summe=0</div>
<div style="left:3px;top:736px;width:1015px;height:1px;background:#8c8c8c"></div>
<div style="left:3px;top:737px;width:1015px;height:1px;background:#fff"></div>
<div style="left:0px;top:742px;width:1024px;height:2px;background:#000"></div>
<div style="left:3px;top:738px;width:18px;height:4px;background:#b4b4b4"></div>
<div style="left:1003px;top:737px;width:17px;height:5px;background:#b4b4b4"></div>
<div style="left:1002px;top:737px;width:1px;height:5px;background:#fff"></div>
<svg style="left:11px;top:149px" width="17" height="16" shape-rendering="crispEdges"><rect x="0" y="5" width="7" height="6" fill="#800080" stroke="#000" stroke-width="1"/><ellipse cx="9" cy="5" rx="3.5" ry="4" fill="#ffff80" stroke="#000" stroke-width="1"/><path d="M3 14 L7 9 L11 14Z" fill="#40d0d0" stroke="#000" stroke-width="0.8"/><path d="M12 0 L16 3 L12 6Z" fill="#20d020" stroke="#000" stroke-width="0.6"/></svg>
<svg style="left:11px;top:171px" width="17" height="16" shape-rendering="crispEdges"><rect x="0.5" y="3.5" width="12" height="11" fill="#fff" stroke="#000" stroke-width="1"/><path d="M0 7.5 H13 M0 11.5 H13 M4.5 3 V15 M8.5 3 V15" stroke="#000" stroke-width="1"/><rect x="3.5" y="6.5" width="6" height="5" fill="#ffff80" stroke="#000080" stroke-width="1.2"/><path d="M12 0 L16 3 L12 6Z" fill="#20d020" stroke="#000" stroke-width="0.6"/></svg>
<svg style="left:11px;top:194px" width="17" height="16" shape-rendering="crispEdges"><circle cx="6" cy="9" r="5.5" fill="#ffff80" stroke="#000" stroke-width="1"/><path d="M6 9 L6 3.5 A5.5 5.5 0 0 1 11.5 9Z" fill="#40d0d0"/><path d="M6 9 L11.5 9 A5.5 5.5 0 0 1 3 13.5Z" fill="#800080"/><path d="M12 0 L16 3 L12 6Z" fill="#20d020" stroke="#000" stroke-width="0.6"/></svg>
<svg style="left:11px;top:217px" width="17" height="16" shape-rendering="crispEdges"><path d="M0.5 8.5 H7 M0.5 8.5 V14.5 H3" stroke="#000" stroke-width="1" fill="none"/><path d="M3 14 L12 5 L14 7 L5 16Z" fill="#2040e0" stroke="#000" stroke-width="0.8"/><path d="M12 0 L16 3 L12 6Z" fill="#20d020" stroke="#000" stroke-width="0.6"/></svg>
<svg style="left:11px;top:240px" width="17" height="16" shape-rendering="crispEdges"><rect x="0.5" y="3.5" width="11" height="11" fill="#fff" stroke="#000" stroke-width="1"/><path d="M2 6.5 H10 M2 9.5 H4 M5 9.5 H10 M2 12.5 H10" stroke="#000" stroke-width="1"/><path d="M12 0 L16 3 L12 6Z" fill="#20d020" stroke="#000" stroke-width="0.6"/></svg>
<svg style="left:11px;top:272px" width="17" height="16" shape-rendering="crispEdges"><rect x="0.5" y="3.5" width="10" height="11" fill="#fff" stroke="#aaa" stroke-width="1"/><path d="M2 6.5 H9 M2 9.5 H9 M2 12.5 H9" stroke="#bbb" stroke-width="1"/><path d="M13 0 V6 M10 3 H16" stroke="#aaa" stroke-width="1.4"/></svg>
<svg style="left:11px;top:295px" width="17" height="16" shape-rendering="crispEdges"><rect x="0.5" y="3.5" width="12" height="11" fill="#ffff80" stroke="#000" stroke-width="1"/><rect x="2" y="5" width="9" height="8" fill="#fff"/><path d="M3 12 Q4 6 9 6" stroke="#000080" stroke-width="1.5" fill="none"/><path d="M8 2 L14 8 L11 11 L5 5Z" fill="#800000" stroke="#000" stroke-width="0.6"/></svg>
<svg style="left:11px;top:317px" width="17" height="16" shape-rendering="crispEdges"><text x="0" y="6" font-family="Liberation Sans" font-weight="bold" font-size="6">ABC</text><path d="M2 10 L5 13 L13 6" stroke="#000080" stroke-width="1.6" fill="none"/></svg>
<svg style="left:11px;top:342px" width="17" height="16" shape-rendering="crispEdges"><text x="0" y="6" font-family="Liberation Sans" font-weight="bold" font-size="6">ABC</text><path d="M0 11 Q2 8 4 11 Q6 14 8 11 Q10 8 12 11 Q14 14 16 11" stroke="#e00000" stroke-width="1.2" fill="none"/></svg>
<svg style="left:11px;top:363px" width="17" height="16" shape-rendering="crispEdges"><rect x="1" y="2" width="5" height="4" fill="#000"/><rect x="10" y="2" width="5" height="4" fill="#000"/><rect x="0" y="5" width="7" height="7" fill="#000"/><rect x="9" y="5" width="7" height="7" fill="#000"/><rect x="6" y="6" width="4" height="3" fill="#000"/><rect x="1" y="10" width="1" height="1" fill="#ff0"/><rect x="10" y="10" width="1" height="1" fill="#ff0"/></svg>
<svg style="left:11px;top:386px" width="17" height="16" shape-rendering="crispEdges"><rect x="0.5" y="1.5" width="14" height="12" fill="#fff" stroke="#000" stroke-width="1"/><rect x="1" y="2" width="13" height="2" fill="#888"/><path d="M4.5 4 V13" stroke="#888" stroke-width="1"/><path d="M6 6.5 H13 M6 8.5 H13 M6 10.5 H13 M2 6.5 H4 M2 8.5 H4 M2 10.5 H4" stroke="#aaa" stroke-width="1"/></svg>
<svg style="left:10px;top:416px" width="18" height="18"><path d="M13.5 2 V9 M10 5.5 H17" stroke="#999" stroke-width="1.3"/><path d="M1 9.5 H13 L9 13.5 V16.5 H5.5 V13.5Z" fill="#fff" stroke="#000" stroke-width="1.4"/><rect x="6" y="11" width="3" height="1" fill="#c0c000"/></svg>
<svg style="left:10px;top:440px" width="18" height="17"><path d="M1.5 8 L4.5 1 H6.5 L9.5 8" stroke="#000080" stroke-width="2" fill="none"/><path d="M3 5.5 H8" stroke="#000080" stroke-width="1.6"/><path d="M3 9.5 L6.5 13" stroke="#000080" stroke-width="1.3"/><path d="M7.5 14 L4.5 13.5 L7 11Z" fill="#000080"/><path d="M10 10 H16 L10 15.5 H16.5" stroke="#000" stroke-width="1.8" fill="none"/></svg>
<svg style="left:10px;top:463px" width="18" height="17"><path d="M1.5 1.5 H7.5 L1.5 7 H8" stroke="#000080" stroke-width="1.8" fill="none"/><path d="M3 9.5 L6.5 13" stroke="#000080" stroke-width="1.3"/><path d="M7.5 14 L4.5 13.5 L7 11Z" fill="#000080"/><path d="M9 16 L12 9 H14 L17 16" stroke="#000" stroke-width="2" fill="none"/><path d="M10.5 13.5 H15.5" stroke="#000" stroke-width="1.6"/></svg>
<svg style="left:11px;top:495px" width="17" height="16" shape-rendering="crispEdges"><rect x="0.5" y="1.5" width="12" height="4" fill="#fff" stroke="#000" stroke-width="1"/><rect x="0.5" y="6.5" width="6" height="4" fill="#fff" stroke="#000" stroke-width="1"/><rect x="0.5" y="11.5" width="6" height="4" fill="#fff" stroke="#000" stroke-width="1"/></svg>
<svg style="left:11px;top:518px" width="17" height="16" shape-rendering="crispEdges"><rect x="0.5" y="1.5" width="12" height="4" fill="#fff" stroke="#aaa" stroke-width="1"/><rect x="0.5" y="6.5" width="6" height="4" fill="#fff" stroke="#aaa" stroke-width="1"/><rect x="0.5" y="11.5" width="6" height="4" fill="#fff" stroke="#aaa" stroke-width="1"/><path d="M8 8 L14 14 M14 8 L8 14" stroke="#aaa" stroke-width="2"/></svg>
</body></html>
